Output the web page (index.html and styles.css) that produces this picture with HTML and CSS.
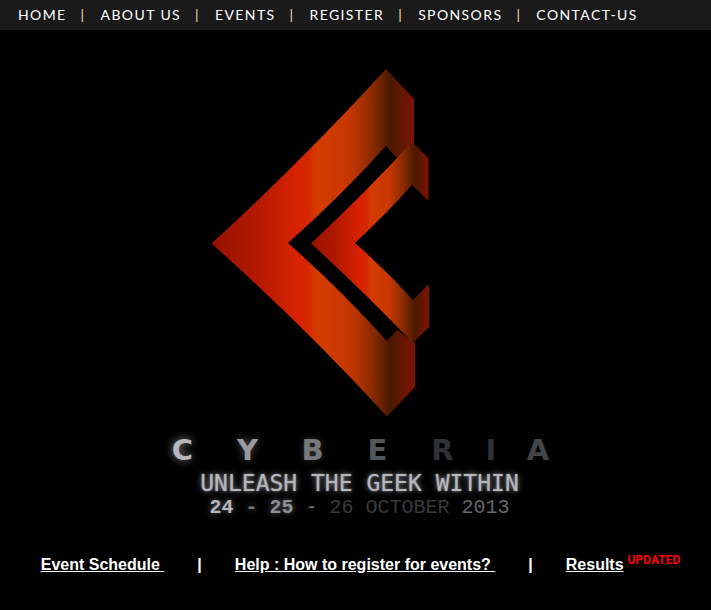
FILE: index.html
```html
<!DOCTYPE html>
<html lang="en">
<head>
<meta charset="utf-8">
<meta name="viewport" content="width=device-width, initial-scale=1">
<title>Cyberia 2013</title>
<link rel="stylesheet" href="styles.css">
</head>
<body>
<nav class="topbar">
  <a href="#">HOME</a>
  <a href="#">ABOUT US</a>
  <a href="#">EVENTS</a>
  <a href="#">REGISTER</a>
  <a href="#">SPONSORS</a>
  <a href="#">CONTACT-US</a>
</nav>
<main class="hero">
  <svg class="emblem" viewBox="210 68 222 350" width="222" height="350" aria-hidden="true">
    <defs>
      <linearGradient id="outer" gradientUnits="userSpaceOnUse" x1="212" y1="0" x2="415" y2="0">
        <stop offset="0" stop-color="#951200"/>
        <stop offset=".2" stop-color="#b01800"/>
        <stop offset=".43" stop-color="#d92300"/>
        <stop offset=".47" stop-color="#d32700"/>
        <stop offset=".52" stop-color="#d43c00"/>
        <stop offset=".68" stop-color="#c43600"/>
        <stop offset=".79" stop-color="#8a2b00"/>
        <stop offset=".88" stop-color="#4a1900"/>
        <stop offset="1" stop-color="#801200"/>
      </linearGradient>
      <linearGradient id="inner" gradientUnits="userSpaceOnUse" x1="311" y1="0" x2="429" y2="0">
        <stop offset="0" stop-color="#951200"/>
        <stop offset=".2" stop-color="#b01800"/>
        <stop offset=".43" stop-color="#d92300"/>
        <stop offset=".47" stop-color="#d32700"/>
        <stop offset=".51" stop-color="#d43c00"/>
        <stop offset=".66" stop-color="#c83700"/>
        <stop offset=".78" stop-color="#8a2b00"/>
        <stop offset=".88" stop-color="#4a1900"/>
        <stop offset="1" stop-color="#801200"/>
      </linearGradient>
    </defs>
    <path fill="url(#outer)" d="M211.500 243.500Q302 161 386 69L414 99V145L397 158L386 146Q339 198 288 243Q339 288 387 341L397 330L415 343V387L387 416.500Q303 325 211.500 243.500Z"/>
    <path fill="url(#inner)" d="M311 243.500Q363 195 412 142L428.500 158V201L412 185Q385 215 355 243Q386 270 413 300L429 284V327L413 343Q363 291 311 243.500Z"/>
  </svg>
  <h1 class="wordmark"><span>C</span><span>Y</span><span>B</span><span>E</span><span>R</span><span>I</span><span>A</span></h1>
  <p class="tagline">UNLEASH THE GEEK WITHIN</p>
  <p class="dates"><b>24</b> <b class="mid">-</b> <b class="next">25</b> <span class="mid">-</span> <span>26 OCTOBER</span> <span class="year">2013</span></p>
</main>
<nav class="quick">
  <a href="#">Event Schedule&nbsp;</a>
  <span>|</span>
  <a href="#">Help : How to register for events?&nbsp;</a>
  <span>|</span>
  <div class="results"><a href="#">Results</a><sup>UPDATED</sup></div>
</nav>
</body>
</html>
```
FILE: styles.css
```css
body {
  margin: 0;
  background: #000;
  color: #fff;
  font-family: "Liberation Sans", Arial, sans-serif;
}

a {
  color: #fff;
}

.topbar {
  display: flex;
  height: 30px;
  padding-left: 18px;
  background: #1a1a1a;
  font: 14px/30px Lato, sans-serif;
  letter-spacing: 0.1em;
  white-space: nowrap;
}

.topbar a {
  text-decoration: none;
}

.topbar a + a::before {
  content: "|";
  margin: 0 15px 0 14px;
  color: #ffe2b0;
}

.hero {
  display: flex;
  flex-direction: column;
  align-items: center;
  padding-top: 38px;
}

.emblem {
  display: block;
  margin-right: 69px;
}

.wordmark {
  display: grid;
  grid-template-columns: repeat(5, 39px) 6px 36px;
  gap: 26px;
  justify-items: center;
  margin: 14px 0 0 8px;
  font: bold 29px/36px "DejaVu Sans", sans-serif;
  color: #55565a;
}

.wordmark span:nth-child(1) {
  color: #b6b7bd;
  text-shadow: 0 0 8px #85868a;
}

.wordmark span:nth-child(2) {
  color: #9a9b9f;
  text-shadow: 0 0 8px #55565a;
}

.wordmark span:nth-child(3) {
  color: #77787c;
  text-shadow: 0 0 6px #333;
}

.wordmark span:nth-child(5),
.wordmark span:nth-child(6) {
  color: #303134;
}

.wordmark span:nth-child(7) {
  color: #444548;
}

.tagline,
.dates {
  margin: 0;
  white-space: nowrap;
}

.tagline {
  margin-top: 2px;
  margin-left: 8px;
  font-family: "DejaVu Sans Mono", monospace;
  font-size: 23px;
  line-height: 26px;
  color: #b6b7bd;
  text-shadow: 0 0 2px #85868a, 0 0 6px #85868a;
}

.dates {
  margin-left: 8px;
  font-family: "Liberation Mono", monospace;
  font-size: 20px;
  line-height: 24px;
  color: #38393c;
}

.dates b {
  color: #b6b7bd;
  text-shadow: 0 0 6px #66676b;
}

.dates .next {
  color: #8e8f94;
}

.dates .mid {
  color: #77787c;
}

.dates .year {
  color: #66676b;
}

.quick {
  display: flex;
  justify-content: center;
  gap: 33px;
  margin: 35px 0 0 10px;
  font-size: 16px;
  font-weight: bold;
  line-height: 20px;
  white-space: nowrap;
}

.results {
  display: flex;
  gap: 4px;
}

.results sup {
  margin-top: -4px;
  font: bold 12px/18px Roboto, sans-serif;
  color: #f00;
}
```
